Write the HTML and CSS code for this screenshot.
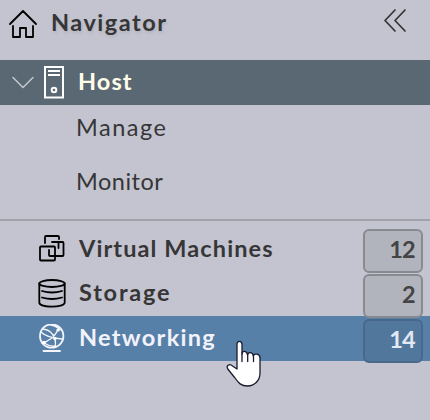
FILE: index.html
```html
<!DOCTYPE html>
<html lang="en">
<head>
<meta charset="utf-8">
<title>Navigator</title>
<link rel="stylesheet" href="styles.css">
</head>
<body>
<nav class="navigator">
  <header class="header">
    <svg class="icon-home" width="30" height="32" viewBox="0 0 30 32"><path d="M2 16 15 3 28 16M5 18V29H12V20H18V29H25V18"/></svg>
    <h1 class="label title">Navigator</h1>
    <svg class="icon-collapse" width="24" height="26" viewBox="0 0 24 26"><path d="M12 2 2 12.500 12 23M22 2 12 12.500 22 23"/></svg>
  </header>
  <div class="row host">
    <svg class="icon-caret" width="24" height="14" viewBox="0 0 24 14"><path d="M2 1.500 12 11.500 22 1.500"/></svg>
    <svg class="icon-host" width="20" height="33" viewBox="0 0 20 33"><rect x="1" y="1" width="18" height="30.500"/><path d="M4 5H16M4 9H16"/><circle cx="10" cy="24" r="2.300"/></svg>
    <span class="label host-label">Host</span>
  </div>
  <div class="children">
    <a class="child label manage">Manage</a>
    <a class="child label monitor">Monitor</a>
  </div>
  <ul class="inventory">
    <li class="row item">
      <svg class="icon" width="30" height="30" viewBox="0 0 30 30"><path d="M7 9V3Q7 2 8 2H20Q21 2 21 3V5M14 8H24.500Q25.500 8 25.500 9V21Q25.500 22 24.500 22H12Q11 22 11 21V16M20.500 8V14"/><rect x="2" y="12.500" width="15" height="14" rx="1"/></svg>
      <span class="label vms">Virtual Machines</span><span class="badge">12</span>
    </li>
    <li class="row item">
      <svg class="icon" width="30" height="30" viewBox="0 0 30 30"><ellipse cx="14" cy="4.500" rx="12.700" ry="3.500"/><path d="M1.300 4.500V23.500C1.300 29 26.700 29 26.700 23.500V4.500M4 12Q14 15 24 12M4 18.500Q14 21.500 24 18.500"/></svg>
      <span class="label storage">Storage</span><span class="badge">2</span>
    </li>
    <li class="row item selected">
      <svg class="icon" width="30" height="30" viewBox="0 0 30 30"><circle cx="13.700" cy="12" r="11.700"/><path d="M5.500 27H22"/><path class="fine" d="M5 5Q14 6 17 15Q18 20 17 23M4 19Q15 16 20 6M3 8Q9 14 24 15M6 19Q12 23 18 22M13 1Q19 2 22 6"/><circle class="node" cx="6" cy="18.500" r="1.800"/><circle class="node" cx="17" cy="14.500" r="1.800"/><circle class="node" cx="20" cy="6" r="1.600"/></svg>
      <span class="label networking">Networking</span><span class="badge">14</span>
    </li>
  </ul>
</nav>
<svg class="pointer" width="36" height="48" viewBox="0 0 36 48"><path d="M11 29V4.500C11 .2 16 .2 16 4.500V14C16.500 10 21 10.500 21.500 15C22 11.500 27 12 27.300 16C28 13 34 13.500 34 18V33C34 41 28 46 21.500 46C15 46 12.500 43 9 38L1.800 29C-.5 25 4 23.500 6.500 26Z"/><path d="M16 13V21.500M21.700 14V21.500M27.500 15V21.500"/></svg>
</body>
</html>
```
FILE: styles.css
```css
* { box-sizing: border-box; }
body {
  margin: 0;
  width: 430px;
  height: 420px;
  overflow: hidden;
  background: #c3c4d0;
  color: #363636;
  font-family: Lato, "Open Sans", sans-serif;
}
svg { flex: none; fill: none; stroke: #000; stroke-width: 1.8; stroke-linecap: round; stroke-linejoin: round; }
.label { margin: 0; font-size: 23.5px; line-height: 30px; font-weight: 700; white-space: nowrap; }
.header { display: flex; height: 60px; padding: 8px 23px 0 8px; }
.title { margin: -1px 0 0 13px; text-shadow: 1px 2px 3px #8884; letter-spacing: 1.5px; }
.icon-collapse { margin-left: auto; stroke: #333; stroke-width: 1.700; }
.row { display: flex; align-items: center; height: 45px; }
.host { padding-left: 11px; background: #596872; color: #fffdea; }
.icon-caret { stroke: #c4c8d0; stroke-width: 1.500; }
.icon-host { margin-left: 9px; stroke: #fff; stroke-width: 2; stroke-linejoin: miter; stroke-linecap: butt; }
.host-label { margin: -3px 0 0 14px; letter-spacing: 1.1px; }
.children { display: flex; flex-direction: column; gap: 24px; height: 116px; padding: 7px 0 0 76px; border-bottom: 2px solid #a0a1a9; }
.child { font-weight: 400; letter-spacing: 1.5px; }
.monitor { letter-spacing: .5px; }
.inventory { margin: 5px 0 0; padding: 0; list-style: none; }
.item { padding: 0 7px 0 38px; }
.item .label { margin: -3px 0 0 11px; }
.item .vms { margin-top: -2px; letter-spacing: 1.1px; }
.item .storage { letter-spacing: 1.8px; }
.item .networking { letter-spacing: 1.3px; }
.badge {
  width: 60px;
  height: 44px;
  margin: 4px 0 0 auto;
  padding: 0 6px;
  border: 2px solid #888a92;
  border-radius: 6px;
  background: #b1b3bd;
  color: #444;
  font-size: 23.5px;
  font-weight: 700;
  line-height: 37px;
  letter-spacing: -.7px;
  text-align: right;
}
.selected { background: #5780a9; color: #f2f2fa; }
.selected svg { stroke: #f5f5fc; }
.selected .badge { border-color: #48688c; background: #52779d; color: #e3e8f2; }
.selected .fine { stroke-width: 1.400; }
.selected .node { fill: #fff; stroke: none; }
.pointer { position: absolute; left: 226px; top: 340px; fill: #fff; stroke: #1b1b30; stroke-width: 1.300; }
```
